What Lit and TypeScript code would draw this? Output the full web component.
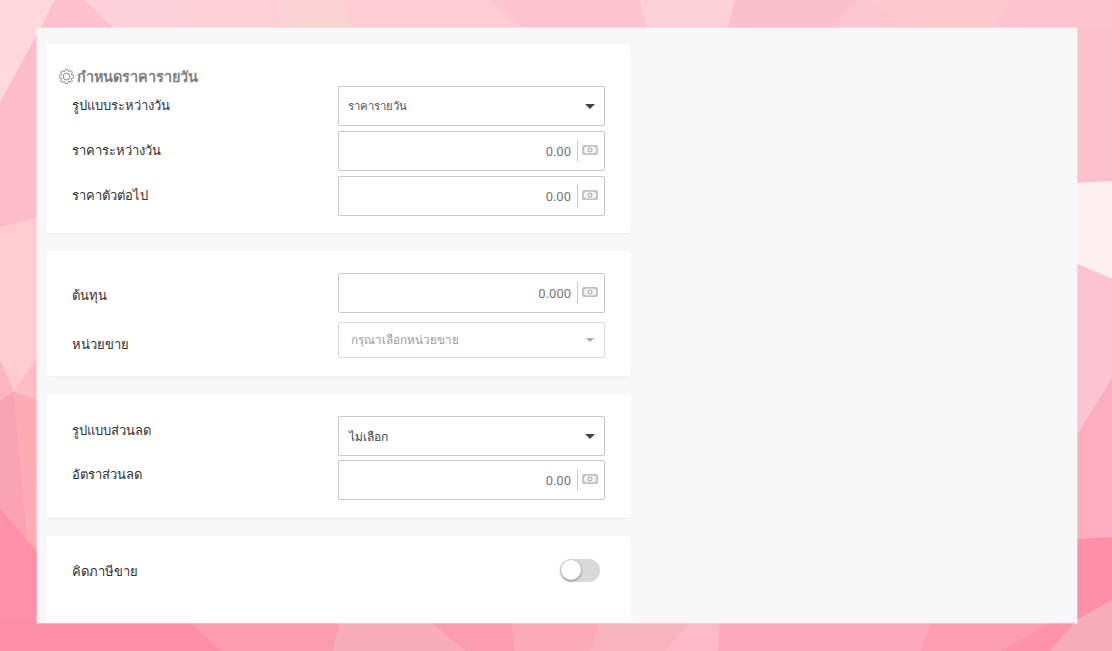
import { css, html, LitElement, svg } from "lit";
import { customElement } from "lit/decorators.js";

// low-poly backdrop, only the parts showing round the panel matter
const POLYS: Array<[string, string]> = [
  ["0,0 1112,0 1112,651 0,651", "#fdc6d0"],
  // top strip
  ["0,0 55,0 37,35 0,102", "#ffd8dc"],
  ["55,0 85,0 113,28 37,35", "#fdc0cc"],
  ["85,0 191,0 174,28 113,28", "#fdd1dc"],
  ["191,0 280,0 278,28 174,28", "#fdd0d6"],
  ["280,0 344,0 352,28 278,28", "#f9d2d4"],
  ["344,0 490,0 523,28 352,28", "#fdcdd3"],
  ["490,0 640,0 647,28 523,28", "#fcc4cf"],
  ["640,0 735,0 728,28 647,28", "#fbd0d8"],
  ["735,0 858,0 832,28 728,28", "#fdbfcd"],
  ["858,0 870,0 905,28 832,28", "#fbc6d0"],
  ["870,0 1010,0 995,28 905,28", "#fdc8ce"],
  ["1010,0 1112,0 1112,40 1077,40 995,28", "#fdc4d0"],
  // right strip
  ["1077,28 1112,28 1112,181 1077,183", "#fdc0cd"],
  ["1077,183 1112,181 1112,279 1077,264", "#fef0f0"],
  ["1077,264 1112,279 1112,378 1077,435", "#fcc4d2"],
  ["1077,435 1112,378 1112,537 1077,539", "#feacbf"],
  ["1077,539 1112,537 1112,600 1077,620", "#fe8fa8"],
  ["1077,620 1112,600 1112,651 1050,651", "#f8aeb8"],
  // left strip
  ["0,102 37,35 37,218 0,227", "#fdbcc9"],
  ["0,227 37,218 37,358 14,392 0,360", "#fdcbd0"],
  ["0,360 14,392 0,400", "#fdb6c0"],
  ["37,358 37,400 14,392", "#fcbcc6"],
  ["14,392 37,400 37,552 28,545", "#fdacb4"],
  ["0,400 14,392 28,545 37,552 0,508", "#fca3b3"],
  ["0,508 37,552 37,651 0,651", "#fe90aa"],
  // bottom strip
  ["0,622 190,622 210,640 222,651 0,651", "#fe8ea6"],
  ["190,622 340,622 333,651 222,651 210,640", "#fb9bab"],
  ["340,622 430,622 465,651 333,651", "#f8aeb8"],
  ["430,622 512,622 515,651 465,651", "#fb9dae"],
  ["512,622 690,622 665,651 515,651", "#fbaab6"],
  ["600,622 690,622 665,651 590,651", "#f8b4bc"],
  ["665,651 690,622 720,622 718,651", "#fdb9c6"],
  ["720,622 930,622 920,651 718,651", "#fda9bb"],
  ["930,622 1050,622 1000,651 920,651", "#fd9fb2"],
  ["1050,622 1077,620 1050,651 1000,651", "#fe93a9"],
];

function gearPoints(): string {
  const pts: string[] = [];
  for (let i = 0; i < 24; i++) {
    const a = ((i - 0.5) / 24) * Math.PI * 2;
    // two points on the tooth tip, one in the valley
    const r = i % 3 === 2 ? 5.2 : 7.4;
    pts.push(`${(7.5 + r * Math.cos(a)).toFixed(2)},${(7.5 + r * Math.sin(a)).toFixed(2)}`);
  }
  return pts.join(" ");
}

const GEAR = html`<svg class="gear" viewBox="0 0 15 15" fill="none" stroke="#8a8a8a" stroke-width="1">
  <polygon points=${gearPoints()}></polygon>
  <circle cx="7.5" cy="7.5" r="3.4"></circle>
</svg>`;

const NOTE = html`<svg class="note" viewBox="0 0 16 10">
  <rect x="0" y="0" width="16" height="10" rx="2" fill="#c4c4c4"></rect>
  <rect x="2" y="1.7" width="12" height="6.6" rx="2.5" fill="#f4f4f4"></rect>
  <circle cx="8" cy="5" r="1.9" fill="none" stroke="#b8b8b8" stroke-width="1.2"></circle>
</svg>`;

@customElement("app-root")
export class AppRoot extends LitElement {
  static styles = css`
    * {
      box-sizing: border-box;
    }

    :host {
      display: block;
      position: relative;
      width: 1112px;
      height: 651px;
      padding: 28px 0 0 37px;
      overflow: hidden;
      font-family: Roboto, "Noto Sans", "Liberation Sans", sans-serif;
      font-size: 13px;
    }

    .backdrop {
      position: absolute;
      inset: 0;
      width: 1112px;
      height: 651px;
    }

    .panel {
      position: relative;
      width: 1040px;
      height: 595px;
      background: #f7f7f7;
      padding: 16px 0 0 9px;
      overflow: hidden;
      display: flex;
      flex-direction: column;
      gap: 18px;
      outline: 1px solid rgba(255, 255, 255, 0.3);
    }

    .card {
      flex: none;
      width: 585px;
      background: #fff;
      border-radius: 4px;
      padding: 22px 26px 18px;
      box-shadow: 0 1px 1px rgba(0, 0, 0, 0.04);
    }

    .card.first {
      padding-top: 24px;
      padding-bottom: 17px;
    }

    .card.tax {
      height: 110px;
      padding-top: 23px;
    }

    .heading {
      display: flex;
      align-items: center;
      gap: 3px;
      margin-left: -13px;
      height: 16px;
      font-size: 14.4px;
      font-weight: 700;
      color: #808080;
      margin-bottom: 2px;
    }

    .gear {
      width: 15px;
      height: 15px;
    }

    .row {
      display: grid;
      grid-template-columns: 266px 267px;
      margin-bottom: 5px;
    }

    .row:last-child {
      margin-bottom: 0;
    }

    .row.wide {
      margin-bottom: 9px;
    }

    .row.tight {
      margin-bottom: 4px;
    }

    .label {
      color: #333;
      font-size: 13px;
      line-height: 20px;
      padding-top: 10px;
    }

    .label.low {
      padding-top: 13px;
    }

    .label.high {
      padding-top: 5px;
    }

    .box {
      height: 40px;
      border: 1px solid #c8c8c8;
      border-radius: 2px;
      display: flex;
      align-items: center;
      color: #555;
      background: #fff;
    }

    .select {
      padding: 0 9px;
      justify-content: space-between;
      font-size: 11.3px;
    }

    .select.strong {
      font-size: 12px;
      color: #444;
      padding-left: 10px;
    }

    .select.plain {
      height: 36px;
      border-color: #d9d9d9;
      color: #999;
      padding: 0 10px 0 12px;
      font-size: 11.7px;
    }

    .caret {
      width: 0;
      height: 0;
      border-left: 5px solid transparent;
      border-right: 5px solid transparent;
      border-top: 5px solid #444;
    }

    .plain .caret {
      border-left-width: 4px;
      border-right-width: 4px;
      border-top: 4px solid #aaa;
    }

    .input {
      justify-content: flex-end;
      padding-right: 6px;
      color: #777;
      font-size: 13px;
    }

    .divider {
      width: 1px;
      height: 22px;
      background: #ccc;
      margin: 0 4px 0 6px;
    }

    .note {
      width: 16px;
      height: 10px;
      margin-top: -2px;
    }

    .toggle-row {
      display: flex;
      justify-content: space-between;
      align-items: center;
      height: 23px;
      padding-right: 5px;
    }

    .toggle-row .label {
      padding-top: 2px;
    }

    .toggle {
      position: relative;
      width: 40px;
      height: 23px;
      border-radius: 12px;
      background: #d9d9d9;
    }

    .knob {
      position: absolute;
      left: 1px;
      top: 1px;
      width: 20px;
      height: 20px;
      border-radius: 50%;
      background: #fff;
      box-shadow: 0 1px 3px rgba(0, 0, 0, 0.4);
    }
  `;

  private _input(value: string) {
    return html`<div class="box input">
      <span>${value}</span><span class="divider"></span>${NOTE}
    </div>`;
  }

  private _select(value: string, variant = "") {
    return html`<div class="box select ${variant}">
      <span>${value}</span><span class="caret"></span>
    </div>`;
  }

  render() {
    return html`
      <svg class="backdrop" viewBox="0 0 1112 651">
        ${POLYS.map(([points, fill]) => svg`<polygon points=${points} fill=${fill}></polygon>`)}
      </svg>
      <div class="panel">
        <section class="card first">
          <div class="heading">${GEAR}<span>กำหนดราคารายวัน</span></div>
          <div class="row">
            <div class="label">รูปแบบระหว่างวัน</div>
            ${this._select("ราคารายวัน")}
          </div>
          <div class="row">
            <div class="label">ราคาระหว่างวัน</div>
            ${this._input("0.00")}
          </div>
          <div class="row">
            <div class="label">ราคาตัวต่อไป</div>
            ${this._input("0.00")}
          </div>
        </section>
        <section class="card">
          <div class="row wide">
            <div class="label low">ต้นทุน</div>
            ${this._input("0.000")}
          </div>
          <div class="row">
            <div class="label low">หน่วยขาย</div>
            ${this._select("กรุณาเลือกหน่วยขาย", "plain")}
          </div>
        </section>
        <section class="card">
          <div class="row tight">
            <div class="label high">รูปแบบส่วนลด</div>
            ${this._select("ไม่เลือก", "strong")}
          </div>
          <div class="row">
            <div class="label high">อัตราส่วนลด</div>
            ${this._input("0.00")}
          </div>
        </section>
        <section class="card tax">
          <div class="toggle-row">
            <div class="label">คิดภาษีขาย</div>
            <div class="toggle"><span class="knob"></span></div>
          </div>
        </section>
      </div>
    `;
  }
}
